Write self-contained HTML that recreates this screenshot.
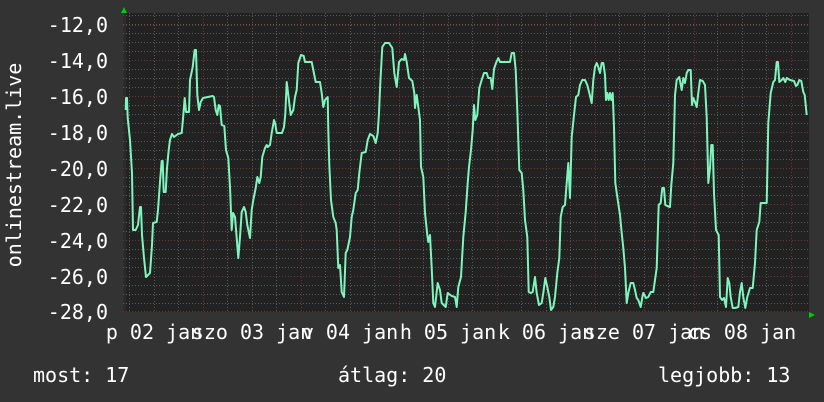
<!DOCTYPE html>
<html><head><meta charset="utf-8"><style>
html,body{margin:0;padding:0;background:#333;}
svg{display:block;}
text{font-family:"DejaVu Sans Mono","Liberation Mono",monospace;font-size:20px;fill:#fff;}
</style></head><body>
<svg width="824" height="402" viewBox="0 0 824 402" xmlns="http://www.w3.org/2000/svg">
<rect width="824" height="402" fill="#333"/>
<rect x="123" y="13" width="686" height="299" fill="#222"/>
<rect x="123" y="13" width="3" height="299" fill="#2b2b2b"/>
<g stroke="#5a5a5a" stroke-width="1" stroke-dasharray="1,2">
<path d="M123 15.5H809M123 24.5H809M123 33.5H809M123 42.5H809M123 51.5H809M123 69.5H809M123 78.5H809M123 87.5H809M123 105.5H809M123 114.5H809M123 123.5H809M123 141.5H809M123 150.5H809M123 159.5H809M123 177.5H809M123 186.5H809M123 195.5H809M123 213.5H809M123 222.5H809M123 231.5H809M123 249.5H809M123 258.5H809M123 267.5H809M123 285.5H809M123 294.5H809M123 303.5H809"/>
<path d="M129.5 13V312M154.5 13V312M178.5 13V312M227.5 13V312M252.5 13V312M276.5 13V312M325.5 13V312M350.5 13V312M374.5 13V312M423.5 13V312M448.5 13V312M472.5 13V312M521.5 13V312M546.5 13V312M570.5 13V312M619.5 13V312M644.5 13V312M668.5 13V312M717.5 13V312M742.5 13V312M766.5 13V312"/>
</g>
<g stroke="#6e3434" stroke-width="1" stroke-dasharray="1,2">
<path d="M123 25.5H809M123 60.5H809M123 96.5H809M123 132.5H809M123 168.5H809M123 204.5H809M123 240.5H809M123 276.5H809M123 311.5H809"/>
<path d="M203.5 13V312M301.5 13V312M399.5 13V312M497.5 13V312M595.5 13V312M694.5 13V312M791.5 13V312"/>
</g>
<polygon points="121,13 127,13 124,7" fill="#00cc00"/>
<polygon points="809,312 809,318 815,315" fill="#00cc00"/>
<polyline fill="none" stroke="#7ff5bd" stroke-width="2" stroke-linejoin="round" points="125.7,110 126,98 127,98 127.7,118 130,140 132,173 133,230 135.7,230 138,225 140,207 141,207 142,235 144,258 146,277 150,273 152,245 153,223 156.7,222 158,210 160,182 161.7,161 162.7,161 163.7,192 165.7,192 167,168 168.7,150 170,140 172,134 174,137 178,134 181.7,133 183,119 184.7,98 186,112 189,112 190,80 192.7,67 194.7,50 196,50 197.3,95 199,110 200.7,102 203,98 212.7,96 214,97 215.7,110 217.3,115 218.7,105 220,106 221.7,125 224.3,126 226,150 228.3,158 230,187 231.7,230 233,213 235,217 236.7,238 238.3,258 240,237 241.7,212 244,207 245.7,212 247.3,225 250,238 251.7,210 253.3,200 255.7,188 257.3,177 259.3,183 260.7,177 262.3,157 265,148 266.7,145 267.7,147 270,145 271.7,133 274,120 275.3,124 276.7,133 282,133 284,127 285.3,114 286.7,82 288.3,95 290.7,115 293.3,110 295,97 296.7,90 298.3,63 301,55 303.7,56 305,62 311.7,62 313.3,70 315.7,82 320,82 321.7,93 323.3,107 325,100 327.7,97 328.3,130 329.3,165 331,200 333.3,217 335.7,223 336.7,230 338.3,268 340,265 341.7,292 344,297 345.7,253 347.3,250 350,237 351.7,217 353.3,210 355.7,193 357.7,190 359.3,173 361.7,153 365.7,152 367.7,140 370,134 373.3,136 375.7,143 377.7,133 379,113 380.3,83 382.3,47 385,43 389,43 392.3,48 394.3,73 396.7,87 399,62 401.7,59 404,60 405,54 406.7,62 409,78 412.3,81 414.3,93 415,108 416.7,95 418.3,107 420,120 421,167 423.3,177 425,213 427.3,235 428.3,242 430,235 431.7,268 433.3,303 435,307 437.7,283 440,290 441.7,303 445.7,307 447.7,293 451.7,296 455,297 456.7,307 458.3,287 461,277 463.3,237 465.7,212 467.7,183 469,167 471,150 472.7,130 474,105 475.3,120 477.3,115 479.3,88 481.7,80 484,73 486.7,73 488.3,78 490.7,78 492.3,89 494,69 496,63 498.3,58 500,62 510,62 511.7,53 514,53 515.7,70 517.3,110 519.3,170 521.7,173 523.3,190 525,220 527.3,237 528.7,292 530.7,293 532.7,292 535,277 536.7,293 539,305 541.7,303 543.3,293 545.3,278 547.3,287 549.3,297 551,310 553.3,307 555,297 557.3,273 559.3,258 560.7,217 562.7,207 565,205 566.7,183 568.3,163 570,198 571.7,137 574,115 576,97 578.3,95 580,85 582.3,80 585,80 587.3,85 589.3,93 591.7,103 593.3,80 595,67 596.7,63 598.3,67 600,73 601.7,63 603.3,63 605,75 606,100 607.3,93 608.7,100 610,93 611.3,100 612.7,93 614,127 615.3,183 617.3,197 620,215 621.7,233 623.3,248 625,268 626.7,303 628.3,293 630.7,283 633.3,283 635,290 636.7,298 638.3,300 640.7,307 642.7,295 643.3,293 646,298 648.3,297 650.7,292 653.3,292 655,280 656.7,268 658.7,205 660.7,203 662.3,188 664,188 665.3,205 667.3,206 670,207 671.3,185 673.3,163 675,95 676.7,80 679.3,77 681.7,90 683.3,78 685,83 686.7,73 688.3,70 690.7,70 692,105 693.3,98 695,102 696.7,107 698.3,93 700,80 702.7,81 705,85 706.7,117 708.3,183 710,168 711.3,145 712.7,145 714,193 716,230 718.7,235 720,297 722,300 724,298 726,307 727.7,278 729.3,283 730.7,297 732.7,308 735,308 738.3,307 740,292 741.7,283 743.3,297 745.3,308 747.3,297 750,288 752.7,288 755,263 756.7,230 759.3,222 760.7,203 766.7,203 768.3,123 770.7,93 773.3,82 775,80 776.7,62 778,62 779.3,82 781.7,80 783.3,78 785.3,82 786.7,78 790,80 794,81 796,86 797.3,85 799.3,80 801.3,81 803.3,92 804.7,95 806.7,115"/>
<g text-anchor="end">
<text x="108" y="32">-12,0</text>
<text x="108" y="68">-14,0</text>
<text x="108" y="104">-16,0</text>
<text x="108" y="140">-18,0</text>
<text x="108" y="176">-20,0</text>
<text x="108" y="212">-22,0</text>
<text x="108" y="248">-24,0</text>
<text x="108" y="284">-26,0</text>
<text x="108" y="319">-28,0</text>
</g>
<text transform="translate(21,165) rotate(-90)" text-anchor="middle">onlinestream.live</text>
<g text-anchor="middle">
<text x="154" y="339">p 02 jan</text>
<text x="252" y="339">szo 03 jan</text>
<text x="350" y="339">v 04 jan</text>
<text x="448" y="339">h 05 jan</text>
<text x="546" y="339">k 06 jan</text>
<text x="644" y="339">sze 07 jan</text>
<text x="742" y="339">cs 08 jan</text>
</g>
<text x="33" y="382">most: 17</text>
<text x="338" y="382">átlag: 20</text>
<text x="658" y="382">legjobb: 13</text>
</svg>
</body></html>
